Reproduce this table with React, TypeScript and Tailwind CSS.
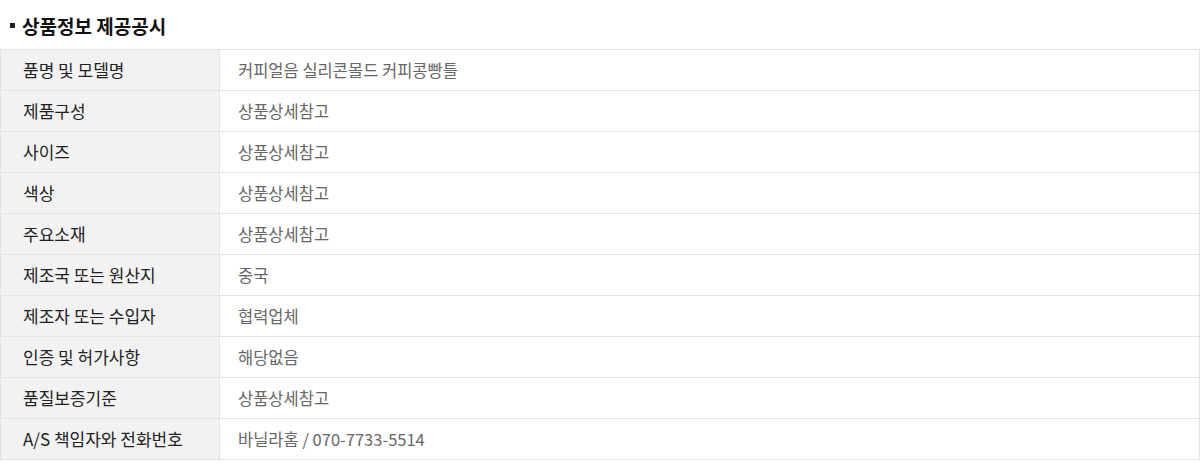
const rows: [string, string][] = [
  ["품명 및 모델명", "커피얼음 실리콘몰드 커피콩빵틀"],
  ["제품구성", "상품상세참고"],
  ["사이즈", "상품상세참고"],
  ["색상", "상품상세참고"],
  ["주요소재", "상품상세참고"],
  ["제조국 또는 원산지", "중국"],
  ["제조자 또는 수입자", "협력업체"],
  ["인증 및 허가사항", "해당없음"],
  ["품질보증기준", "상품상세참고"],
  ["A/S 책임자와 전화번호", "바닐라홈 / 070-7733-5514"],
];

export default function App() {
  return (
    <div className="w-[1200px] h-[475px] bg-white font-['Noto_Sans_CJK_KR','Noto_Sans',sans-serif]">
      {/* section title */}
      <div className="flex items-center h-[49px] pt-[2px] pl-[10px]">
        <span className="w-[5px] h-[5px] bg-[#222] mr-[7px]" />
        <h2 className="text-[19px] font-bold text-[#111] leading-none">상품정보 제공공시</h2>
      </div>
      <table className="w-full border-collapse table-fixed">
        <colgroup>
          <col className="w-[219px]" />
          <col />
        </colgroup>
        <tbody>
          {rows.map(([label, value]) => (
            <tr key={label} className="h-[41px]">
              <th className="border border-[#e3e3e3] bg-[#f2f2f2] text-left font-normal text-[17px] text-[#222] pl-[22px] py-0">
                {label}
              </th>
              <td className="border border-[#e3e3e3] text-[16.5px] text-[#666] pl-[18px] py-0">
                {value}
              </td>
            </tr>
          ))}
        </tbody>
      </table>
    </div>
  );
}
